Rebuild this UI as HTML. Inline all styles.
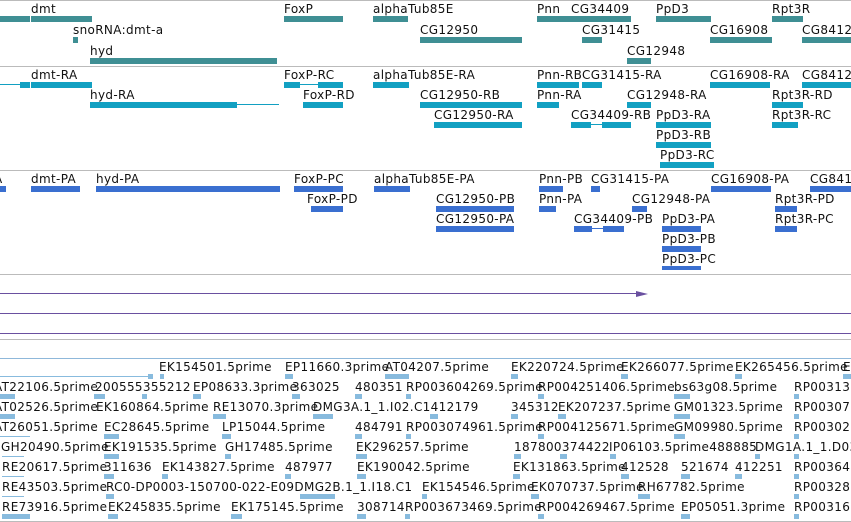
<!DOCTYPE html>
<html><head><meta charset="utf-8"><style>
body{margin:0;width:851px;height:522px;overflow:hidden;background:#fff;position:relative;font-family:"DejaVu Sans","Liberation Sans",sans-serif;font-size:12px;color:#111}
div{position:absolute}
.t{white-space:nowrap;line-height:14px;letter-spacing:0.35px}
.h{height:1px;background:#bbb;left:0;width:851px}
.a{height:6px;background:#3f8f94}
.b{height:6px;background:#12a0c2}
.c{height:6px;background:#3a6fd0}
.e{height:5px;background:#88bbde}
.ln{height:1px}
</style></head><body>
<div class="h" style="top:0"></div>
<div class="h" style="top:66px"></div>
<div class="h" style="top:170px"></div>
<div class="h" style="top:274px"></div>
<div class="h" style="top:339px"></div>
<div class="h" style="top:521px"></div>
<div style="top:293px;left:0;width:637px;height:1px;background:#6a50a0"></div>
<div style="top:291px;left:636px;width:0;height:0;border-top:3px solid transparent;border-bottom:3px solid transparent;border-left:12px solid #6a50a0"></div>
<div style="top:313px;left:0;width:851px;height:1px;background:#6a50a0"></div>
<div style="top:333px;left:0;width:851px;height:1px;background:#6a50a0"></div>
<div style="top:358px;left:0;width:851px;height:1px;background:#8fb8da"></div>

<!-- track1 -->
<div class="t" style="top:2px;left:31px">dmt</div>
<div class="t" style="top:2px;left:284px">FoxP</div>
<div class="t" style="top:2px;left:373px">alphaTub85E</div>
<div class="t" style="top:2px;left:537px">Pnn</div>
<div class="t" style="top:2px;left:571px">CG34409</div>
<div class="t" style="top:2px;left:656px">PpD3</div>
<div class="t" style="top:2px;left:772px">Rpt3R</div>
<div class="a" style="top:16px;left:0;width:30px"></div>
<div class="a" style="top:16px;left:31px;width:61px"></div>
<div class="a" style="top:16px;left:284px;width:59px"></div>
<div class="a" style="top:16px;left:373px;width:35px"></div>
<div class="a" style="top:16px;left:537px;width:34px"></div>
<div class="a" style="top:16px;left:571px;width:60px"></div>
<div class="a" style="top:16px;left:656px;width:55px"></div>
<div class="a" style="top:16px;left:772px;width:31px"></div>
<div class="t" style="top:23px;left:73px">snoRNA:dmt-a</div>
<div class="t" style="top:23px;left:420px">CG12950</div>
<div class="t" style="top:23px;left:582px">CG31415</div>
<div class="t" style="top:23px;left:710px">CG16908</div>
<div class="t" style="top:23px;left:802px">CG8412</div>
<div class="a" style="top:37px;left:73px;width:5px"></div>
<div class="a" style="top:37px;left:420px;width:102px"></div>
<div class="a" style="top:37px;left:582px;width:20px"></div>
<div class="a" style="top:37px;left:710px;width:62px"></div>
<div class="a" style="top:37px;left:802px;width:49px"></div>
<div class="t" style="top:44px;left:90px">hyd</div>
<div class="t" style="top:44px;left:627px">CG12948</div>
<div class="a" style="top:58px;left:90px;width:187px"></div>
<div class="a" style="top:58px;left:627px;width:24px"></div>

<!-- track2 -->
<div class="t" style="top:68px;left:31px">dmt-RA</div>
<div class="t" style="top:68px;left:284px">FoxP-RC</div>
<div class="t" style="top:68px;left:373px">alphaTub85E-RA</div>
<div class="t" style="top:68px;left:537px">Pnn-RB</div>
<div class="t" style="top:68px;left:582px">CG31415-RA</div>
<div class="t" style="top:68px;left:710px">CG16908-RA</div>
<div class="t" style="top:68px;left:802px">CG8412</div>
<div class="b ln" style="top:84px;left:0;width:30px"></div>
<div class="b" style="top:82px;left:20px;width:10px"></div>
<div class="b" style="top:82px;left:31px;width:61px"></div>
<div class="b ln" style="top:84px;left:284px;width:59px"></div>
<div class="b" style="top:82px;left:284px;width:16px"></div>
<div class="b" style="top:82px;left:318px;width:25px"></div>
<div class="b" style="top:82px;left:373px;width:36px"></div>
<div class="b" style="top:82px;left:537px;width:42px"></div>
<div class="b" style="top:82px;left:582px;width:20px"></div>
<div class="b" style="top:82px;left:710px;width:60px"></div>
<div class="b" style="top:82px;left:802px;width:49px"></div>
<div class="t" style="top:88px;left:90px">hyd-RA</div>
<div class="t" style="top:88px;left:303px">FoxP-RD</div>
<div class="t" style="top:88px;left:420px">CG12950-RB</div>
<div class="t" style="top:88px;left:537px">Pnn-RA</div>
<div class="t" style="top:88px;left:627px">CG12948-RA</div>
<div class="t" style="top:88px;left:772px">Rpt3R-RD</div>
<div class="b ln" style="top:104px;left:90px;width:189px"></div>
<div class="b" style="top:102px;left:90px;width:147px"></div>
<div class="b" style="top:102px;left:303px;width:40px"></div>
<div class="b" style="top:102px;left:420px;width:102px"></div>
<div class="b" style="top:102px;left:537px;width:22px"></div>
<div class="b" style="top:102px;left:627px;width:24px"></div>
<div class="b" style="top:102px;left:772px;width:31px"></div>
<div class="t" style="top:108px;left:434px">CG12950-RA</div>
<div class="t" style="top:108px;left:571px">CG34409-RB</div>
<div class="t" style="top:108px;left:656px">PpD3-RA</div>
<div class="t" style="top:108px;left:772px">Rpt3R-RC</div>
<div class="b" style="top:122px;left:434px;width:88px"></div>
<div class="b ln" style="top:124px;left:571px;width:60px"></div>
<div class="b" style="top:122px;left:571px;width:20px"></div>
<div class="b" style="top:122px;left:602px;width:29px"></div>
<div class="b" style="top:122px;left:656px;width:55px"></div>
<div class="b" style="top:122px;left:772px;width:26px"></div>
<div class="t" style="top:128px;left:656px">PpD3-RB</div>
<div class="b" style="top:142px;left:656px;width:55px"></div>
<div class="t" style="top:148px;left:660px">PpD3-RC</div>
<div class="b" style="top:162px;left:660px;width:54px"></div>

<!-- track3 -->
<div class="t" style="top:172px;left:-6px">A</div>
<div class="t" style="top:172px;left:31px">dmt-PA</div>
<div class="t" style="top:172px;left:96px">hyd-PA</div>
<div class="t" style="top:172px;left:294px">FoxP-PC</div>
<div class="t" style="top:172px;left:374px">alphaTub85E-PA</div>
<div class="t" style="top:172px;left:539px">Pnn-PB</div>
<div class="t" style="top:172px;left:591px">CG31415-PA</div>
<div class="t" style="top:172px;left:711px">CG16908-PA</div>
<div class="t" style="top:172px;left:810px">CG841</div>
<div class="c" style="top:186px;left:0;width:6px"></div>
<div class="c" style="top:186px;left:31px;width:49px"></div>
<div class="c" style="top:186px;left:96px;width:184px"></div>
<div class="c" style="top:186px;left:294px;width:49px"></div>
<div class="c" style="top:186px;left:374px;width:36px"></div>
<div class="c" style="top:186px;left:539px;width:24px"></div>
<div class="c" style="top:186px;left:591px;width:9px"></div>
<div class="c" style="top:186px;left:711px;width:60px"></div>
<div class="c" style="top:186px;left:810px;width:41px"></div>
<div class="t" style="top:192px;left:307px">FoxP-PD</div>
<div class="t" style="top:192px;left:436px">CG12950-PB</div>
<div class="t" style="top:192px;left:539px">Pnn-PA</div>
<div class="t" style="top:192px;left:632px">CG12948-PA</div>
<div class="t" style="top:192px;left:775px">Rpt3R-PD</div>
<div class="c" style="top:206px;left:311px;width:32px"></div>
<div class="c" style="top:206px;left:436px;width:78px"></div>
<div class="c" style="top:206px;left:539px;width:17px"></div>
<div class="c" style="top:206px;left:632px;width:15px"></div>
<div class="c" style="top:206px;left:775px;width:22px"></div>
<div class="t" style="top:212px;left:436px">CG12950-PA</div>
<div class="t" style="top:212px;left:574px">CG34409-PB</div>
<div class="t" style="top:212px;left:662px">PpD3-PA</div>
<div class="t" style="top:212px;left:775px">Rpt3R-PC</div>
<div class="c" style="top:226px;left:436px;width:78px"></div>
<div class="c ln" style="top:228px;left:574px;width:50px"></div>
<div class="c" style="top:226px;left:574px;width:18px"></div>
<div class="c" style="top:226px;left:603px;width:21px"></div>
<div class="c" style="top:226px;left:662px;width:39px"></div>
<div class="c" style="top:226px;left:775px;width:22px"></div>
<div class="t" style="top:232px;left:662px">PpD3-PB</div>
<div class="c" style="top:246px;left:662px;width:39px"></div>
<div class="t" style="top:252px;left:662px">PpD3-PC</div>
<div class="c" style="top:266px;left:662px;width:39px;height:4px"></div>

<!-- ESTs -->
<div class="t" style="top:360px;left:159px">EK154501.5prime</div>
<div class="t" style="top:360px;left:285px">EP11660.3prime</div>
<div class="t" style="top:360px;left:385px">AT04207.5prime</div>
<div class="t" style="top:360px;left:511px">EK220724.5prime</div>
<div class="t" style="top:360px;left:621px">EK266077.5prime</div>
<div class="t" style="top:360px;left:735px">EK265456.5prime</div>
<div class="t" style="top:360px;left:843px">E</div>
<div class="e ln" style="top:376px;left:0;width:152px"></div>
<div class="e" style="top:374px;left:148px;width:5px"></div>
<div class="e" style="top:374px;left:160px;width:4px"></div>
<div class="e" style="top:374px;left:285px;width:8px"></div>
<div class="e" style="top:374px;left:385px;width:24px"></div>
<div class="e" style="top:374px;left:511px;width:7px"></div>
<div class="e" style="top:374px;left:621px;width:7px"></div>
<div class="e" style="top:374px;left:735px;width:7px"></div>
<div class="e" style="top:374px;left:843px;width:8px"></div>

<div class="t" style="top:380px;left:-6px">AT22106.5prime</div>
<div class="t" style="top:380px;left:95px">200555355212</div>
<div class="t" style="top:380px;left:193px">EP08633.3prime</div>
<div class="t" style="top:380px;left:292px">363025</div>
<div class="t" style="top:380px;left:355px">480351</div>
<div class="t" style="top:380px;left:406px">RP003604269.5prime</div>
<div class="t" style="top:380px;left:538px">RP004251406.5prime</div>
<div class="t" style="top:380px;left:674px">bs63g08.5prime</div>
<div class="t" style="top:380px;left:794px">RP00313</div>
<div class="e" style="top:394px;left:0;width:15px"></div>
<div class="e" style="top:394px;left:94px;width:11px"></div>
<div class="e" style="top:394px;left:142px;width:5px"></div>
<div class="e" style="top:394px;left:193px;width:8px"></div>
<div class="e" style="top:394px;left:292px;width:8px"></div>
<div class="e" style="top:394px;left:355px;width:7px"></div>
<div class="e" style="top:394px;left:406px;width:5px"></div>
<div class="e" style="top:394px;left:538px;width:6px"></div>
<div class="e" style="top:394px;left:674px;width:16px"></div>
<div class="e" style="top:394px;left:794px;width:5px"></div>

<div class="t" style="top:400px;left:-6px">AT02526.5prime</div>
<div class="t" style="top:400px;left:96px">EK160864.5prime</div>
<div class="t" style="top:400px;left:213px">RE13070.3prime</div>
<div class="t" style="top:400px;left:313px">DMG3A.1_1.I02.C1412179</div>
<div class="t" style="top:400px;left:511px">345312</div>
<div class="t" style="top:400px;left:558px">EK207237.5prime</div>
<div class="t" style="top:400px;left:674px">GM01323.5prime</div>
<div class="t" style="top:400px;left:794px">RP00307</div>
<div class="e" style="top:414px;left:0;width:15px"></div>
<div class="e" style="top:414px;left:213px;width:13px"></div>
<div class="e" style="top:414px;left:313px;width:20px"></div>
<div class="e" style="top:414px;left:430px;width:8px"></div>
<div class="e" style="top:414px;left:511px;width:7px"></div>
<div class="e" style="top:414px;left:558px;width:8px"></div>
<div class="e" style="top:414px;left:674px;width:16px"></div>
<div class="e" style="top:414px;left:794px;width:5px"></div>

<div class="t" style="top:420px;left:-6px">AT26051.5prime</div>
<div class="t" style="top:420px;left:104px">EC28645.5prime</div>
<div class="t" style="top:420px;left:222px">LP15044.5prime</div>
<div class="t" style="top:420px;left:355px">484791</div>
<div class="t" style="top:420px;left:406px">RP003074961.5prime</div>
<div class="t" style="top:420px;left:538px">RP004125671.5prime</div>
<div class="t" style="top:420px;left:674px">GM09980.5prime</div>
<div class="t" style="top:420px;left:794px">RP00302</div>
<div class="e ln" style="top:436px;left:0;width:30px"></div>
<div class="e" style="top:434px;left:104px;width:15px"></div>
<div class="e" style="top:434px;left:222px;width:9px"></div>
<div class="e" style="top:434px;left:355px;width:7px"></div>
<div class="e" style="top:434px;left:406px;width:5px"></div>
<div class="e" style="top:434px;left:538px;width:6px"></div>
<div class="e" style="top:434px;left:674px;width:11px"></div>
<div class="e" style="top:434px;left:794px;width:5px"></div>

<div class="t" style="top:440px;left:1px">GH20490.5prime</div>
<div class="t" style="top:440px;left:104px">EK191535.5prime</div>
<div class="t" style="top:440px;left:225px">GH17485.5prime</div>
<div class="t" style="top:440px;left:356px">EK296257.5prime</div>
<div class="t" style="top:440px;left:514px">187800374422</div>
<div class="t" style="top:440px;left:609px">IP06103.5prime488885</div>
<div class="t" style="top:440px;left:755px">DMG1A.1_1.D03</div>
<div class="e ln" style="top:456px;left:2px;width:22px"></div>
<div class="e" style="top:454px;left:104px;width:15px"></div>
<div class="e" style="top:454px;left:225px;width:6px"></div>
<div class="e" style="top:454px;left:356px;width:11px"></div>
<div class="e" style="top:454px;left:514px;width:7px"></div>
<div class="e" style="top:454px;left:560px;width:7px"></div>
<div class="e" style="top:454px;left:610px;width:6px"></div>
<div class="e" style="top:454px;left:755px;width:5px"></div>
<div class="e" style="top:454px;left:794px;width:5px"></div>

<div class="t" style="top:460px;left:2px">RE20617.5prime</div>
<div class="t" style="top:460px;left:104px">311636</div>
<div class="t" style="top:460px;left:162px">EK143827.5prime</div>
<div class="t" style="top:460px;left:285px">487977</div>
<div class="t" style="top:460px;left:357px">EK190042.5prime</div>
<div class="t" style="top:460px;left:513px">EK131863.5prime</div>
<div class="t" style="top:460px;left:621px">412528</div>
<div class="t" style="top:460px;left:681px">521674</div>
<div class="t" style="top:460px;left:735px">412251</div>
<div class="t" style="top:460px;left:794px">RP00364</div>
<div class="e ln" style="top:476px;left:2px;width:22px"></div>
<div class="e" style="top:474px;left:104px;width:10px"></div>
<div class="e" style="top:474px;left:162px;width:6px"></div>
<div class="e" style="top:474px;left:285px;width:6px"></div>
<div class="e" style="top:474px;left:357px;width:9px"></div>
<div class="e" style="top:474px;left:513px;width:7px"></div>
<div class="e" style="top:474px;left:621px;width:8px"></div>
<div class="e" style="top:474px;left:681px;width:9px"></div>
<div class="e" style="top:474px;left:735px;width:7px"></div>
<div class="e" style="top:474px;left:794px;width:5px"></div>

<div class="t" style="top:480px;left:2px">RE43503.5prime</div>
<div class="t" style="top:480px;left:106px">RC0-DP0003-150700-022-E09DMG2B.1_1.I18.C1</div>
<div class="t" style="top:480px;left:422px">EK154546.5prime</div>
<div class="t" style="top:480px;left:531px">EK070737.5prime</div>
<div class="t" style="top:480px;left:638px">RH67782.5prime</div>
<div class="t" style="top:480px;left:794px">RP00328</div>
<div class="e ln" style="top:496px;left:2px;width:22px"></div>
<div class="e" style="top:494px;left:106px;width:8px"></div>
<div class="e" style="top:494px;left:300px;width:35px"></div>
<div class="e" style="top:494px;left:422px;width:5px"></div>
<div class="e" style="top:494px;left:531px;width:8px"></div>
<div class="e" style="top:494px;left:638px;width:12px"></div>
<div class="e" style="top:494px;left:794px;width:5px"></div>

<div class="t" style="top:500px;left:2px">RE73916.5prime</div>
<div class="t" style="top:500px;left:108px">EK245835.5prime</div>
<div class="t" style="top:500px;left:231px">EK175145.5prime</div>
<div class="t" style="top:500px;left:357px">308714</div>
<div class="t" style="top:500px;left:405px">RP003673469.5prime</div>
<div class="t" style="top:500px;left:538px">RP004269467.5prime</div>
<div class="t" style="top:500px;left:681px">EP05051.3prime</div>
<div class="t" style="top:500px;left:794px">RP00316</div>
<div class="e" style="top:514px;left:2px;width:28px"></div>
<div class="e" style="top:514px;left:108px;width:10px"></div>
<div class="e" style="top:514px;left:231px;width:11px"></div>
<div class="e" style="top:514px;left:357px;width:9px"></div>
<div class="e" style="top:514px;left:405px;width:5px"></div>
<div class="e" style="top:514px;left:538px;width:6px"></div>
<div class="e" style="top:514px;left:681px;width:9px"></div>
<div class="e" style="top:514px;left:794px;width:5px"></div>
</body></html>
